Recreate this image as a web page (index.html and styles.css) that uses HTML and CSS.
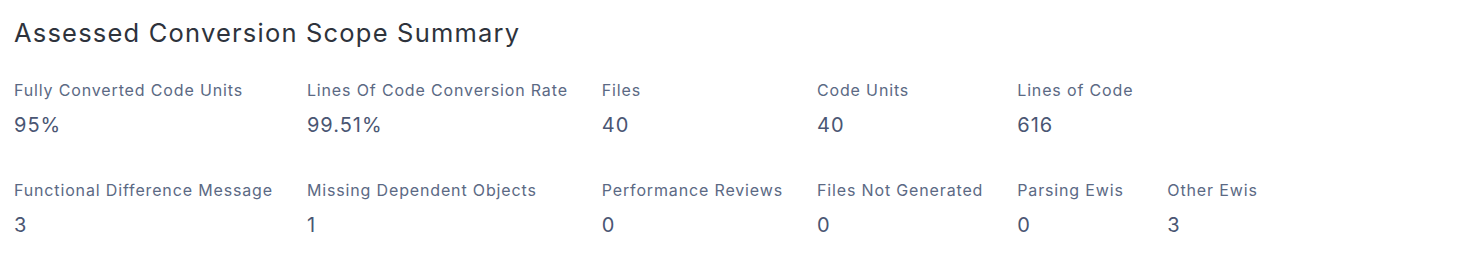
FILE: index.html
```html
<!DOCTYPE html>
<html lang="en">
<head>
<meta charset="utf-8">
<title>Assessed Conversion Scope Summary</title>
<link rel="stylesheet" href="styles.css">
</head>
<body>
<section class="summary">
  <h2 class="summary-title">Assessed Conversion Scope Summary</h2>
  <div class="metrics">
    <div class="metric"><div class="metric-label">Fully Converted Code Units</div><div class="metric-value">95%</div></div>
    <div class="metric"><div class="metric-label">Lines Of Code Conversion Rate</div><div class="metric-value">99.51%</div></div>
    <div class="metric"><div class="metric-label">Files</div><div class="metric-value">40</div></div>
    <div class="metric"><div class="metric-label">Code Units</div><div class="metric-value">40</div></div>
    <div class="metric"><div class="metric-label">Lines of Code</div><div class="metric-value">616</div></div>
    <div class="metric metric-empty"></div>
    <div class="metric"><div class="metric-label">Functional Difference Message</div><div class="metric-value">3</div></div>
    <div class="metric"><div class="metric-label">Missing Dependent Objects</div><div class="metric-value">1</div></div>
    <div class="metric"><div class="metric-label">Performance Reviews</div><div class="metric-value">0</div></div>
    <div class="metric"><div class="metric-label">Files Not Generated</div><div class="metric-value">0</div></div>
    <div class="metric"><div class="metric-label">Parsing Ewis</div><div class="metric-value">0</div></div>
    <div class="metric"><div class="metric-label">Other Ewis</div><div class="metric-value">3</div></div>
  </div>
</section>
</body>
</html>
```
FILE: styles.css
```css
html, body {
  margin: 0;
  padding: 0;
  background: #ffffff;
}
body {
  font-family: Inter, "Noto Sans", sans-serif;
}
.summary {
  padding: 17px 14px 0 14px;
}
.summary-title {
  margin: 0;
  font-size: 25.5px;
  font-weight: 400;
  line-height: 32px;
  letter-spacing: 1.2px;
  color: #2e333c;
}
.metrics {
  margin-top: 31px;
  display: grid;
  grid-template-columns: repeat(6, auto);
  justify-content: start;
  column-gap: 34px;
  row-gap: 43px;
}
.metric-label {
  font-size: 16px;
  line-height: 20px;
  letter-spacing: 0.85px;
  color: #5b6984;
}
.metric-value {
  margin-top: 13px;
  font-size: 20px;
  line-height: 24px;
  letter-spacing: 1px;
  color: #4a5673;
}
```
